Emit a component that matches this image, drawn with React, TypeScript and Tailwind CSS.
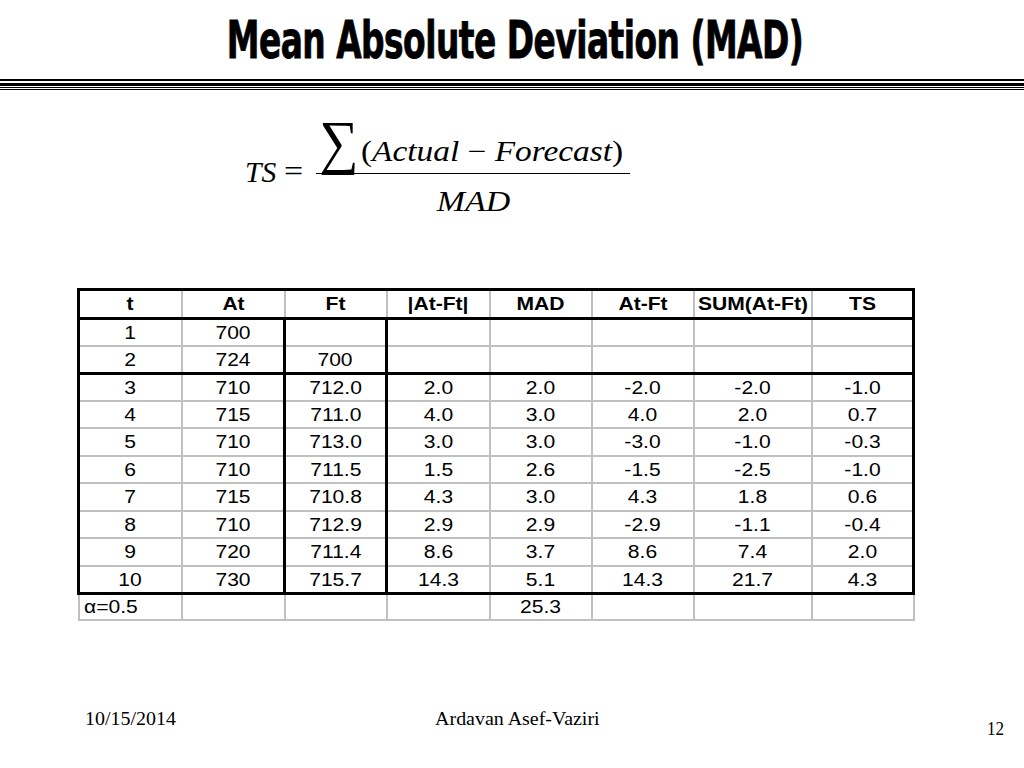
const header = ['t', 'At', 'Ft', '|At-Ft|', 'MAD', 'At-Ft', 'SUM(At-Ft)', 'TS']

const rows = [
  ['1', '700', '', '', '', '', '', ''],
  ['2', '724', '700', '', '', '', '', ''],
  ['3', '710', '712.0', '2.0', '2.0', '-2.0', '-2.0', '-1.0'],
  ['4', '715', '711.0', '4.0', '3.0', '4.0', '2.0', '0.7'],
  ['5', '710', '713.0', '3.0', '3.0', '-3.0', '-1.0', '-0.3'],
  ['6', '710', '711.5', '1.5', '2.6', '-1.5', '-2.5', '-1.0'],
  ['7', '715', '710.8', '4.3', '3.0', '4.3', '1.8', '0.6'],
  ['8', '710', '712.9', '2.9', '2.9', '-2.9', '-1.1', '-0.4'],
  ['9', '720', '711.4', '8.6', '3.7', '8.6', '7.4', '2.0'],
  ['10', '730', '715.7', '14.3', '5.1', '14.3', '21.7', '4.3'],
]

const footRow = ['α=0.5', '', '', '', '25.3', '', '', '']

const colWidths = ['w-[103px]', 'w-[103px]', 'w-[102px]', 'w-[103px]', 'w-[102px]', 'w-[102px]', 'w-[118px]', 'w-[102px]']

// the slide is stretched sideways, so text gets widened a bit
function Wide({ children, className = '' }: { children: React.ReactNode; className?: string }) {
  return <span className={`inline-block scale-x-[1.17] ${className}`}>{children}</span>
}

function bodyCell(col: number, row: number) {
  let cls = 'h-[27.5px] p-0 pt-[1px] text-center border-2 border-[#c0c0c0]'
  if (col === 0) cls += ' border-l-[3px] border-l-black'
  if (col === 7) cls += ' border-r-[3px] border-r-black'
  if (col === 1 || col === 2) cls += ' border-r-[3px] border-r-black'
  if (row === 1 || row === 9) cls += ' border-b-[3px] border-b-black'
  return cls
}

function TrackingTable() {
  return (
    <table className="ml-[77px] mt-[70px] w-[835px] table-fixed border-collapse text-[18px] leading-none text-black font-['Liberation_Sans',Arial,sans-serif]">
      <colgroup>
        {colWidths.map((w, i) => (
          <col key={i} className={w} />
        ))}
      </colgroup>
      <thead>
        <tr>
          {header.map((h, i) => (
            <th
              key={h}
              className={`h-[28.5px] p-0 pt-[1px] text-center font-bold border-2 border-[#c0c0c0] border-t-[3px] border-t-black border-b-[3px] border-b-black ${
                i === 0 ? 'border-l-[3px] border-l-black' : ''
              } ${i === 7 ? 'border-r-[3px] border-r-black' : ''}`}
            >
              <Wide>{h}</Wide>
            </th>
          ))}
        </tr>
      </thead>
      <tbody>
        {rows.map((r, ri) => (
          <tr key={ri}>
            {r.map((v, ci) => (
              <td key={ci} className={bodyCell(ci, ri)}>
                <Wide>{v}</Wide>
              </td>
            ))}
          </tr>
        ))}
        <tr>
          {footRow.map((v, ci) => (
            <td
              key={ci}
              className={`h-[27px] p-0 pt-[1px] border-2 border-[#c0c0c0] ${ci === 0 ? 'text-left pl-[4px]' : 'text-center'}`}
            >
              <Wide className={ci === 0 ? 'origin-left' : ''}>{v}</Wide>
            </td>
          ))}
        </tr>
      </tbody>
    </table>
  )
}

function Formula() {
  return (
    <div className="mt-[28px] flex h-[100px] items-start pl-[245px] text-black font-['Liberation_Serif','Times_New_Roman',serif]">
      <span className="mt-[40px] w-[39px] text-[29px] italic leading-none">
        <span className="inline-block origin-left scale-x-[1.02]">TS</span>
      </span>
      <span className="mt-[39px] w-[32px] text-[29px] leading-none">
        <Wide className="origin-left">=</Wide>
      </span>
      <div className="flex w-[314px] flex-col items-center">
        <div className="flex h-[55px] w-full items-end pl-[3px]">
          <span className="pb-[1px] text-[60px] leading-none">
            <span className="inline-block origin-left scale-x-[0.92]">∑</span>
          </span>
          <span className="-ml-[1px] pb-[7px] text-[29px] leading-none whitespace-nowrap">
            <span className="inline-block origin-left scale-x-[1.15]">
              (<i>Actual</i> − <i>Forecast</i>)
            </span>
          </span>
        </div>
        <div className="h-px w-full bg-black" />
        <div className="pt-[13px] text-[29px] italic leading-none">
          <Wide>MAD</Wide>
        </div>
      </div>
    </div>
  )
}

export default function App() {
  return (
    <div className="flex h-[768px] w-[1024px] flex-col overflow-hidden bg-white">
      <div className="flex h-[79px] items-center justify-center pl-[6px] pt-[4px]">
        <h1 className="inline-block scale-y-[1.4] text-[36.5px] font-bold leading-none tracking-[-0.5px] text-black font-['DejaVu_Sans_Condensed','DejaVu_Sans',sans-serif] [-webkit-text-stroke:0.6px_black]">
          Mean Absolute Deviation (MAD)
        </h1>
      </div>
      <div className="flex flex-col">
        <div className="h-[2px] bg-black" />
        <div className="h-[2px]" />
        <div className="h-[3px] bg-black" />
        <div className="h-px" />
        <div className="h-px bg-black" />
        <div className="h-px" />
        <div className="h-px bg-black" />
      </div>
      <Formula />
      <TrackingTable />
      <div className="mt-auto mb-[30px] flex items-start text-[19px] leading-none text-black font-['Liberation_Serif','Times_New_Roman',serif]">
        <div className="w-[387px] pl-[85px]">
          <span className="inline-block origin-left scale-x-[1.05]">10/15/2014</span>
        </div>
        <div className="w-[260px] text-center">
          <span className="inline-block scale-x-[1.05]">Ardavan Asef-Vaziri</span>
        </div>
        <div className="flex-1 pr-[20px] pt-[10px] text-right">
          <span className="inline-block origin-right scale-x-[0.9]">12</span>
        </div>
      </div>
    </div>
  )
}
